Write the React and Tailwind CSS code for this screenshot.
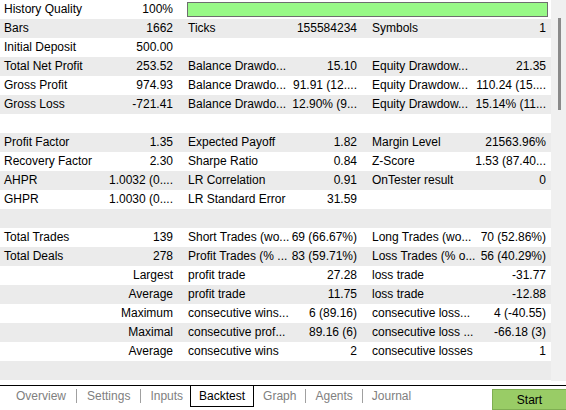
import React from 'react';

const rows = [
  ['History Quality', '100%', 'BAR'],
  ['Bars', '1662', 'Ticks', '155584234', 'Symbols', '1'],
  ['Initial Deposit', '500.00', '', '', '', ''],
  ['Total Net Profit', '253.52', 'Balance Drawdo...', '15.10', 'Equity Drawdow...', '21.35'],
  ['Gross Profit', '974.93', 'Balance Drawdo...', '91.91 (12....', 'Equity Drawdow...', '110.24 (15....'],
  ['Gross Loss', '-721.41', 'Balance Drawdo...', '12.90% (9...', 'Equity Drawdow...', '15.14% (11...'],
  [],
  ['Profit Factor', '1.35', 'Expected Payoff', '1.82', 'Margin Level', '21563.96%'],
  ['Recovery Factor', '2.30', 'Sharpe Ratio', '0.84', 'Z-Score', '1.53 (87.40...'],
  ['AHPR', '1.0032 (0....', 'LR Correlation', '0.91', 'OnTester result', '0'],
  ['GHPR', '1.0030 (0....', 'LR Standard Error', '31.59', '', ''],
  [],
  ['Total Trades', '139', 'Short Trades (wo...', '69 (66.67%)', 'Long Trades (wo...', '70 (52.86%)'],
  ['Total Deals', '278', 'Profit Trades (% ...', '83 (59.71%)', 'Loss Trades (% o...', '56 (40.29%)'],
  ['', 'Largest', 'profit trade', '27.28', 'loss trade', '-31.77'],
  ['', 'Average', 'profit trade', '11.75', 'loss trade', '-12.88'],
  ['', 'Maximum', 'consecutive wins...', '6 (89.16)', 'consecutive loss...', '4 (-40.55)'],
  ['', 'Maximal', 'consecutive prof...', '89.16 (6)', 'consecutive loss ...', '-66.18 (3)'],
  ['', 'Average', 'consecutive wins', '2', 'consecutive losses', '1'],
  [],
];

const Cell = ({ label, value, className }) => (
  <div className={`flex items-center whitespace-nowrap ${className}`}>
    <span className="shrink-0">{label}</span>
    <span className="flex-1 text-right">{value}</span>
  </div>
);

const Sep = () => <div className="w-px h-[14px] bg-[#a0a0a0] mt-[3px]" />;

const App = () => {
  return (
    <div className="w-[566px] h-[410px] bg-white overflow-hidden font-['Liberation_Sans',Arial,sans-serif] text-[12px] text-black">
      {/* Report table + scrollbar */}
      <div className="flex h-[381px]">
        <div className="w-[551px]">
          {rows.map((r, i) => (
            <div
              key={i}
              className={`flex h-[19px] leading-[19px] ${i % 2 === 1 ? 'bg-[#ebebeb]' : 'bg-white'}`}
            >
              {r.length > 0 && (
                <>
                  <Cell label={r[0]} value={r[1]} className="w-[184px] pl-[4px] pr-[11px]" />
                  {r[2] === 'BAR' ? (
                    <div className="flex-1 pl-[3px] pr-[3px] py-[2px]">
                      <div className="h-full bg-[#98f987] border border-[#6e6e6e]" />
                    </div>
                  ) : (
                    <>
                      <Cell label={r[2]} value={r[3]} className="w-[184px] pl-[4px] pr-[11px]" />
                      <Cell label={r[4]} value={r[5]} className="flex-1 pl-[4px] pr-[5px]" />
                    </>
                  )}
                </>
              )}
            </div>
          ))}
        </div>
        <div className="w-[15px] bg-[#f0f0f0] pt-[18px] pl-[7px]">
          <div className="w-[3px] h-[92px] bg-[#8a8a8a]" />
        </div>
      </div>

      {/* Tabs */}
      <div className="mt-[4px] border-t border-black flex h-[25px]">
        <div className="flex pl-[6px] text-[#808080] leading-[16px]">
          <span className="px-[10px] pt-[2px]">Overview</span>
          <Sep />
          <span className="px-[10px] pt-[2px]">Settings</span>
          <Sep />
          <span className="pl-[9px] pr-[7px] pt-[2px]">Inputs</span>
          <div className="h-[21px] border-l border-r border-b border-black bg-white text-black px-[8px] pt-[2px]">
            Backtest
          </div>
          <span className="px-[9px] pt-[2px]">Graph</span>
          <Sep />
          <span className="px-[9px] pt-[2px]">Agents</span>
          <Sep />
          <span className="px-[9px] pt-[2px]">Journal</span>
        </div>
        <div className="ml-auto mt-[3px] w-[74px] h-[21px] bg-[#99cc66] border border-[#7fae52] border-r-0 flex items-center justify-center text-black">
          Start
        </div>
      </div>
    </div>
  );
};

export default App;
